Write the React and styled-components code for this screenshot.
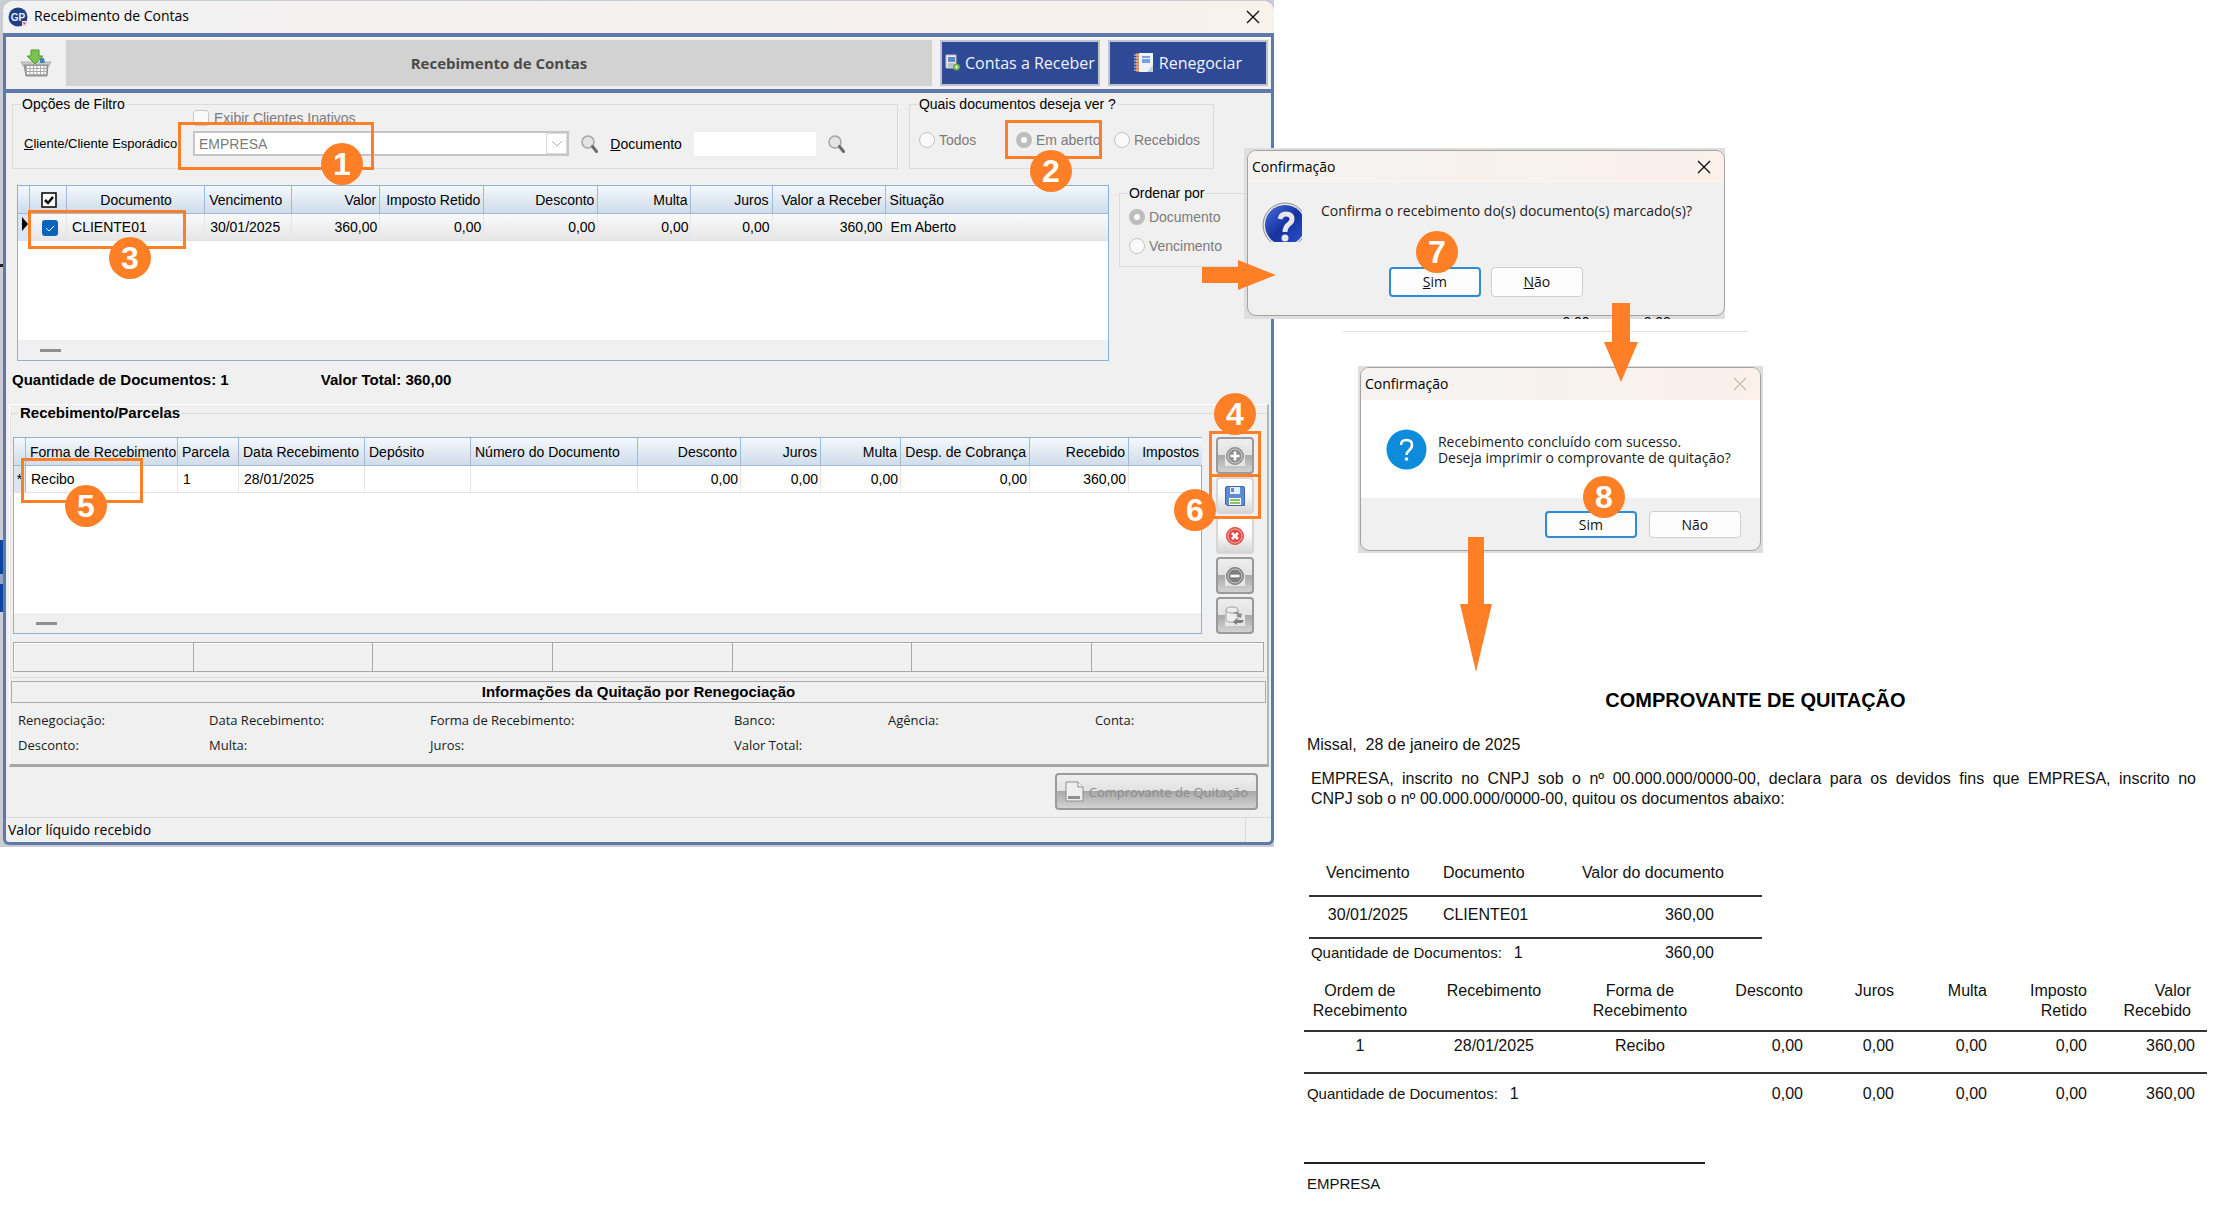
import React from 'react';
import styled, { createGlobalStyle, css } from 'styled-components';

const ORANGE = '#ff7f27';
const BLUE = '#5f79ad';

const GlobalStyle = createGlobalStyle`
* {
box-sizing: border-box;
}
body {
margin: 0;
background: white;
font-family: "Liberation Sans", Arial, sans-serif;
font-size: 14px;
line-height: 16px;
color: #000;
}
button, input, select {
font: inherit;
margin: 0;
}
svg {
flex-shrink: 0;
}
`

const Page = styled.main`
display: flex;
align-items: flex-start;
`

const Backdrop = styled.div`
width: 57.1%;
flex-shrink: 0;
padding: 1px 0 2px 3px;
background: linear-gradient(#c9ccd2 0 264px, #222 264px 267px, #c9ccd2 267px 540px, #0b47a1 540px 574px, #8fa3c4 574px 584px, #0b47a1 584px 612px, #c9ccd2 612px);
`

const AppWindow = styled.section`
border: 3px solid ${BLUE};
border-top: 0;
border-radius: 9px 9px 6px 6px;
background: #f0f0f0;
`

const TitleBar = styled.header`
display: flex;
align-items: center;
height: 32px;
margin: 0 -3px;
padding: 0 14px 0 3px;
background: linear-gradient(90deg, #f2f2f3, #f8f1ec);
border-radius: 9px 9px 0 0;
font: 14px/20px "Open Sans", "Noto Sans", sans-serif;
`

const TitleText = styled.h1`
flex: 1;
margin: 0 0 2px 5px;
font: inherit;
`

const CloseButton = styled.button`
display: flex;
padding: 0;
border: 0;
background: none;
color: ${p => (p.disabled ? '#c4c0be' : '#111')};
`

const Toolbar = styled.div`
display: flex;
align-items: center;
gap: 8px;
height: 60px;
border: solid ${BLUE};
border-width: 4px 0;
padding: 2px 3px 3px 8px;
box-shadow: inset 0 2px #fafafa;
`

const ToolIcon = styled.button`
display: flex;
justify-content: center;
width: 44px;
padding: 0;
border: 0;
background: none;
`

const ToolTitle = styled.h2`
flex: 1;
margin: 0;
background: #d2d2d2;
color: #4a4a4a;
font: bold 15px/46px "Open Sans", "Noto Sans", sans-serif;
text-align: center;
`

const NavButton = styled.button`
display: flex;
align-items: center;
justify-content: center;
gap: 5px;
width: 160px;
height: 46px;
padding: 0;
border: 2px solid #bfc3cb;
background: #2e4a96;
color: #f1f3f8;
font: 16px/20px "Open Sans", "Noto Sans", sans-serif;
white-space: nowrap;
`

const FilterRow = styled.div`
display: flex;
gap: 11px;
padding: 3px 57px 0 6px;
`

const Group = styled.fieldset`
position: relative;
min-width: 0;
margin: 0;
padding: 0 0 12px;
border: 1px solid #dcdcdc;
flex: ${p => p.$flex || 'none'};
`

const Legend = styled.legend`
margin-left: 8px;
padding: 0 1px;
white-space: nowrap;
font-weight: ${p => (p.$bold ? 'bold' : 'normal')};
font-size: ${p => (p.$bold ? '15px' : '14px')};
`

const InactiveLabel = styled.label`
display: flex;
align-items: center;
gap: 5px;
height: 15px;
margin: -2px 0 0 180px;
color: #7b7b7b;
`

const CheckBox = styled.input`
appearance: none;
width: 16px;
height: 16px;
flex-shrink: 0;
border: 1px solid #c8c8c8;
border-radius: 3px;
background: #fafafa;
`

const FieldRow = styled.div`
display: flex;
align-items: center;
gap: 12px;
margin-top: 6px;
padding: 0 52px 0 11px;
`

const ClientLabel = styled.label`
width: 157px;
font-size: 13px;
white-space: nowrap;
`

const Combo = styled.div`
position: relative;
flex: 1;
`

const ComboSelect = styled.select`
display: block;
appearance: none;
width: 100%;
height: 25px;
padding: 0 4px;
border: 2px solid #c6c6c6;
border-radius: 0;
background: white;
color: #7b7b7b;
opacity: 1;
`

const ComboArrow = styled.span`
position: absolute;
top: 2px;
right: 2px;
display: flex;
align-items: center;
justify-content: center;
width: 21px;
height: 21px;
border: 1px solid #dcdcdc;
pointer-events: none;
`

const DocInput = styled.input`
width: 122px;
height: 24px;
border: 0;
background: white;
`

const IconButton = styled.button`
display: flex;
padding: 0;
border: 0;
background: none;
`

const Radios = styled.div`
display: flex;
flex-direction: ${p => (p.$column ? 'column' : 'row')};
gap: ${p => (p.$column ? '13px' : '0')};
padding: ${p => (p.$column ? '8px 9px 0' : '20px 9px 0')};
`

const RadioLabel = styled.label`
position: relative;
display: flex;
align-items: center;
gap: 4px;
width: ${p => p.$width || 'auto'};
color: #7b7b7b;
white-space: nowrap;
`

const Radio = styled.input`
appearance: none;
width: 16px;
height: 16px;
margin: 0;
flex-shrink: 0;
border: 1px solid #c4c4c4;
border-radius: 50%;
background: #fafafa;
&:checked {
border: 5px solid #bdbdbd;
}
`

/* orange rectangle drawn over the part that a step talks about */
const Mark = styled.div`
position: absolute;
z-index: 2;
border: 3px solid ${ORANGE};
pointer-events: none;
top: ${p => p.$top}px;
left: ${p => p.$left}px;
width: ${p => p.$width}px;
height: ${p => p.$height}px;
`

const Badge = styled.span`
position: absolute;
z-index: 3;
top: ${p => p.$top}px;
left: ${p => p.$left}px;
width: 42px;
height: 42px;
border-radius: 50%;
background: ${ORANGE};
color: white;
font-weight: bold;
font-size: 32px;
line-height: 42px;
text-align: center;
`

const GridRow = styled.div`
display: flex;
align-items: flex-start;
gap: ${p => p.$gap}px;
padding: ${p => p.$padding};
`

const GridBox = styled.div`
position: relative;
flex: 1;
min-width: 0;
display: flex;
flex-direction: column;
height: ${p => p.$height}px;
border: 1px solid #8fb0cf;
background: white;
`

const Table = styled.table`
width: 100%;
table-layout: fixed;
border-collapse: separate;
border-spacing: 0;
`

const Th = styled.th`
height: 28px;
padding: 0 3px 0 4px;
border-right: 1px solid #9dbbd8;
border-bottom: 1px solid #9dbbd8;
background: linear-gradient(#f4f8fc, #cfdcea);
font-weight: normal;
text-align: ${p => p.$align || 'left'};
white-space: nowrap;
&:last-child {
border-right: 0;
}
`

const Td = styled.td`
height: 27px;
padding: 0 2px 0 5px;
border-right: 1px solid #e6e6e6;
border-bottom: 1px solid #e2e2e2;
text-align: ${p => p.$align || 'left'};
white-space: nowrap;
${p => p.$shaded && css`
background: linear-gradient(#fafafa, #e6e6e6);
`}
&:first-child {
padding: 0;
border-right: 1px solid #9dbbd8;
background: #dce6f1;
}
&:last-child {
border-right: 0;
}
`

const BlueCheck = styled.span`
display: inline-flex;
vertical-align: middle;
`

const ScrollStrip = styled.div`
display: flex;
align-items: center;
height: 20px;
margin-top: auto;
padding-left: 22px;
background: #f0f0f0;
&::before {
content: "";
width: 21px;
height: 3px;
background: #8f8f8f;
}
`

const Totals = styled.div`
display: flex;
gap: 92px;
height: 43px;
padding: 11px 6px 0;
font-size: 15px;
font-weight: bold;
`

const Panel = styled.div`
margin: 0 2px 0 3px;
border: solid;
border-width: 1px 2px 3px 1px;
border-color: #fff #b5b5b5 #a6a6a6 #fff;
`

const ParcelGroup = styled(Group)`
border-color: #dcdcdc #f0f0f0 #dcdcdc #e4e4e4;
padding-bottom: 5px;
`

const SideButtons = styled.div`
position: relative;
display: flex;
flex-direction: column;
gap: 3px;
`

const Glossy = css`
border: 2px solid #9a9a9a;
border-radius: 4px;
background: linear-gradient(#eee 0, #e2e2e2 49%, #a9a9a9 50%, #d2d2d2 100%);
`

const SideButton = styled.button`
display: flex;
align-items: center;
justify-content: center;
width: 38px;
height: 37px;
padding: 0;
border: 2px solid #d6d6d6;
border-radius: 4px;
background: linear-gradient(#fff 40%, #d6d6d6);
${p => p.disabled && Glossy}
`

const IconPlate = styled.span`
display: flex;
background: ${p => (p.$grey ? '#e6e6e6' : 'none')};
`

const StatusCells = styled.div`
display: flex;
height: 30px;
margin: 8px 2px 0;
border: 1px solid #a9a9a9;
box-shadow: inset 1px 1px #fff;
`

const StatusCell = styled.div`
flex: 180;
border-right: 1px solid #a9a9a9;
&:last-child {
flex: 172;
border-right: 0;
}
`

const InfoTitle = styled.h3`
margin: 3px 1px 0;
border: 1px solid #a9a9a9;
font-size: 15px;
line-height: 20px;
text-align: center;
`

const InfoGrid = styled.div`
display: grid;
grid-template-columns: 191fr 221fr 304fr 154fr 207fr 172fr;
row-gap: 5px;
padding: 7px 0 9px 8px;
font: 13px/20px "Open Sans", "Noto Sans", sans-serif;
color: #1a1a1a;
`

const Actions = styled.div`
display: flex;
justify-content: flex-end;
padding: 6px 13px 7px 0;
`

const ReceiptButton = styled.button`
display: flex;
align-items: center;
justify-content: center;
gap: 5px;
width: 203px;
height: 37px;
padding: 0;
color: #8c8c8c;
font: 13px/20px "Open Sans", "Noto Sans", sans-serif;
white-space: nowrap;
${Glossy}
`

const StatusBar = styled.footer`
display: flex;
border-top: 1px solid #dadada;
font: 14px/24px "Open Sans", "Noto Sans", sans-serif;
padding-left: 2px;
`

const StatusText = styled.span`
flex: 1;
margin-right: 25px;
border-right: 1px solid #dadada;
`

const Side = styled.div`
position: relative;
z-index: 4;
flex: 1;
min-width: 0;
padding-top: 148px;
`

const Shot = styled.div`
position: relative;
width: ${p => p.$width}px;
margin: ${p => p.$margin};
padding: ${p => p.$padding};
background: #dedede;
`

const Dialog = styled.section`
position: relative;
overflow: hidden;
border: 1px solid #a2a2a2;
border-radius: 9px;
background: #f0f0f0;
font: 14px/16px "Open Sans", "Noto Sans", sans-serif;
color: #1c1c1c;
`

const DialogTitle = styled.header`
display: flex;
align-items: center;
justify-content: space-between;
height: 32px;
padding: 0 13px 0 4px;
background: linear-gradient(90deg, #f4f3f1, #fbf0ea);
color: #000;
`

const DialogBody = styled.div`
display: flex;
gap: ${p => (p.$white ? '11px' : '19px')};
height: ${p => (p.$white ? '98px' : '84px')};
padding: ${p => (p.$white ? '29px 0 0 25px' : '19px 0 0 14px')};
background: ${p => (p.$white ? 'white' : 'none')};
`

const Message = styled.p`
margin: ${p => (p.$lines === 2 ? '5px 0 0' : '1px 0 0')};
white-space: nowrap;
`

const DialogButtons = styled.div`
display: flex;
justify-content: ${p => (p.$right ? 'flex-end' : 'center')};
gap: ${p => (p.$right ? '12px' : '10px')};
padding: ${p => (p.$right ? '13px 19px 12px' : '0 0 18px')};
`

const DialogButton = styled.button`
width: 92px;
height: ${p => (p.$small ? '27px' : '30px')};
padding: 0;
border: ${p => (p.$primary ? '2px solid #2f8ad8' : '1px solid #cfcfcf')};
border-radius: 4px;
background: #fdfdfd;
color: #111;
`

/* leftover of the list behind the first dialog */
const Leftover = styled.div`
position: absolute;
right: 54px;
bottom: 0;
display: flex;
gap: 54px;
height: 3px;
overflow: hidden;
font-size: 14px;
line-height: 12px;
`

const Arrow = styled.svg`
position: absolute;
z-index: 5;
top: ${p => p.$top}px;
left: ${p => p.$left}px;
fill: ${ORANGE};
`

const Divider = styled.hr`
width: 405px;
margin: 12px 0 34px 69px;
border: 0;
border-top: 1px solid #e2e2e2;
`

const Receipt = styled.article`
margin: 135px 24px 0 30px;
font-size: 16px;
line-height: 20px;
color: #111;
`

const ReceiptTitle = styled.h2`
margin: 0;
font-size: 20px;
line-height: 24px;
text-align: center;
color: #000;
`

const City = styled.p`
margin: 23px 0 0 3px;
white-space: pre;
`

const Statement = styled.p`
margin: 14px 11px 54px 7px;
text-align: justify;
`

const DocTable = styled(Table)`
width: 50%;
margin-left: 5px;
`

const DocTh = styled.th`
padding: 0 ${p => p.$pad || 0}px 12px ${p => p.$indent || 0}px;
border-bottom: 2px solid #333;
font-weight: normal;
text-align: ${p => p.$align || 'left'};
`

const DocTd = styled.td`
padding: 8px ${p => p.$pad || 0}px 12px ${p => p.$indent || 0}px;
border-bottom: 2px solid #333;
text-align: ${p => p.$align || 'left'};
`

const FootTd = styled.td`
padding: ${p => p.$top}px ${p => p.$pad || 0}px 0 ${p => p.$indent || 0}px;
text-align: ${p => p.$align || 'left'};
white-space: nowrap;
`

const CountLabel = styled.span`
margin-right: 12px;
font-size: 15px;
`

const PayTable = styled(Table)`
margin-top: 18px;
`

const PayTh = styled(DocTh)`
padding-bottom: 9px;
vertical-align: top;
`

const PayTd = styled(DocTd)`
padding-top: 4px;
padding-bottom: 16px;
`

const Signature = styled.p`
width: 401px;
margin: 58px 0 0;
padding: 10px 3px 0;
border-top: 2px solid #222;
font-size: 15px;
`

const CloseIcon = () => (
    <svg width="14" height="14" viewBox="0 0 14 14" fill="none" stroke="currentColor" strokeWidth="1.4">
        <path d="M1 1l12 12M13 1L1 13" />
    </svg>
)

const LogoIcon = () => (
    <svg width="23" height="20" viewBox="0 0 23 20">
        <circle cx="12" cy="10" r="9.5" fill="#1f3f86" />
        <text x="12" y="14" textAnchor="middle" fontSize="10" fontWeight="bold" fontFamily="Liberation Sans, sans-serif" fill="#e8eefb">GP</text>
        <path d="M16 14h5v5h-5z" fill="#e9dfe2" />
        <path d="M17 15l3 1-2 2z" fill="#d8434a" />
    </svg>
)

const BasketIcon = () => (
    <svg width="32" height="28" viewBox="0 0 32 28">
        <path d="M1 13h30l-2 4H3z" fill="#c9c9c9" stroke="#b3b3b3" />
        <path d="M4 16h24l-1 11H6z" fill="#a9a9a9" stroke="#8c8c8c" />
        <path d="M7 18h19M7 21h19M7 24h19" stroke="#fff" strokeWidth="2" strokeDasharray="2.500 1" />
        <path d="M20 9l4 0 1 5-5 0z" fill="#3f86b8" />
        <path d="M11 1h8v6h4l-8 8-8-8h4z" fill="#7cc24f" stroke="#4f9a2c" />
    </svg>
)

const ReceiveIcon = () => (
    <svg width="15" height="17" viewBox="0 0 15 17">
        <path d="M1 1h10v13H1z" fill="#e9ecef" stroke="#b9bfc6" />
        <path d="M3 3h7v5H3z" fill="#5f86c8" />
        <path d="M3 10h6M3 12h6" stroke="#8d939b" />
        <circle cx="11.500" cy="13" r="3.500" fill="#5fae3c" />
        <path d="M11.500 11v4M9.500 13h4" stroke="#fff" strokeWidth="1.200" />
    </svg>
)

const NotebookIcon = () => (
    <svg width="20" height="21" viewBox="0 0 20 21">
        <path d="M2 1h4v19H2z" fill="#c9764b" />
        <path d="M5 1h14v19H5z" fill="#eef3f9" />
        <path d="M0 3h5M0 6h5M0 9h5M0 12h5M0 15h5M0 18h5" stroke="#dadada" />
        <path d="M8 5h8M8 8h8M8 10h8" stroke="#5a87cf" strokeWidth="1.500" />
        <path d="M19 13l-6 7h6z" fill="#c5cfdb" />
    </svg>
)

const SearchIcon = () => (
    <svg width="17" height="18" viewBox="0 0 17 18" fill="none">
        <circle cx="7" cy="7" r="6" fill="#e2e4e6" stroke="#a4a4a4" strokeWidth="1.500" />
        <path d="M11.500 11.500l4 5" stroke="#6b6b6b" strokeWidth="3" strokeLinecap="round" />
    </svg>
)

const RoundIcon = ({ color, path }) => (
    <svg width="20" height="20" viewBox="0 0 20 20" fill="none">
        <circle cx="10" cy="10" r="8.500" fill={color} stroke={color} />
        <circle cx="10" cy="10" r="7" stroke="#fff" strokeOpacity="0.6" />
        <path d={path} stroke="#fff" strokeWidth="2.600" />
    </svg>
)

const DiskIcon = () => (
    <svg width="20" height="20" viewBox="0 0 20 20">
        <path d="M2 .5h16q1.500 0 1.500 1.500v17.500H2L.5 18V2Q.5.500 2 .5z" fill="#5d8cd6" stroke="#3c66b4" />
        <path d="M5 1h10v7H5z" fill="#e9eff9" />
        <path d="M6 2h3v4H6z" fill="#5d8cd6" />
        <path d="M4 12h12v7H4z" fill="#fff" />
        <path d="M5 14h10M5 17h10" stroke="#86c95a" strokeWidth="2" />
    </svg>
)

const DatabaseIcon = () => (
    <svg width="20" height="20" viewBox="0 0 20 20" fill="#ededed" stroke="#a2a2a2">
        <path d="M1 4v10c0 3 12 3 12 0V4" />
        <ellipse cx="7" cy="4" rx="6" ry="3" />
        <path d="M8 8q4-4 7 0l2-1-1 5-5-2 2-1q-2-2-5-1z" fill="#8a8a8a" stroke="none" />
        <path d="M19 14h-7v-2l-4 4 4 3v-2h5z" fill="#7d7d7d" stroke="none" />
    </svg>
)

const PageIcon = () => (
    <svg width="19" height="21" viewBox="0 0 19 21" fill="#efefef" stroke="#8d8d8d">
        <path d="M1 1h12l5 5v14H1z" />
        <path d="M13 1v5h5" fill="#fff" />
        <path d="M3 15h12v3H3z" fill="#8f8f8f" stroke="none" />
    </svg>
)

const GlassQuestion = () => (
    <svg width="40" height="40" viewBox="0 0 40 40" fill="none">
        <defs>
            <linearGradient id="glass" x1="0" y1="0" x2="1" y2="1">
                <stop offset="0" stopColor="#4a70dd" />
                <stop offset="0.5" stopColor="#1632a0" />
                <stop offset="1" stopColor="#2f55d0" />
            </linearGradient>
        </defs>
        <circle cx="23" cy="23" r="22" fill="#e4e4e4" stroke="#8b8b8b" />
        <circle cx="23" cy="23" r="20" fill="url(#glass)" />
        <path d="M18 17q1-5 6-5 6 0 6 5 0 3-3 5-4 3-4 8" stroke="#e6e6ea" strokeWidth="5" />
        <circle cx="23" cy="36" r="3.500" fill="#e6e6ea" />
    </svg>
)

const RoundQuestion = () => (
    <svg width="41" height="41" viewBox="0 0 41 41" fill="none">
        <circle cx="20.500" cy="20.500" r="20" fill="#0f8bdc" />
        <path d="M15 16q0-5 5.500-5t5.500 5q0 3-3 5.500-2.500 2-2.500 4.500" stroke="#fff" strokeWidth="2.500" />
        <circle cx="20.500" cy="30" r="1.800" fill="#fff" />
    </svg>
)

const RightArrow = ({ top, left }) => (
    <Arrow $top={top} $left={left} width="74" height="30" viewBox="0 0 74 30">
        <path d="M0 7h36V0l38 15-38 15v-7H0z" />
    </Arrow>
)

const DownArrow = ({ top, left, width, height, neck }) => (
    <Arrow $top={top} $left={left} width={width} height={height} viewBox={`0 0 ${width} ${height}`}>
        <path d={`M8 0h${width - 16}V${neck}h8L${width / 2} ${height}L0 ${neck}h8z`} />
    </Arrow>
)

const documentColumns = [
    { label: 'Documento', width: 138, align: 'center', cell: 'left', value: 'CLIENTE01' },
    { label: 'Vencimento', width: 87, value: '30/01/2025' },
    { label: 'Valor', width: 88, align: 'right', value: '360,00' },
    { label: 'Imposto Retido', width: 104, align: 'right', value: '0,00' },
    { label: 'Desconto', width: 114, align: 'right', value: '0,00' },
    { label: 'Multa', width: 93, align: 'right', value: '0,00' },
    { label: 'Juros', width: 81, align: 'right', value: '0,00' },
    { label: 'Valor a Receber', width: 113, align: 'right', value: '360,00' },
    { label: 'Situação', width: 222, value: 'Em Aberto' },
]

const parcelColumns = [
    { label: 'Forma de Recebimento', width: 152, value: 'Recibo' },
    { label: 'Parcela', width: 61, value: '1' },
    { label: 'Data Recebimento', width: 126, value: '28/01/2025' },
    { label: 'Depósito', width: 106, value: '' },
    { label: 'Número do Documento', width: 167, value: '' },
    { label: 'Desconto', width: 103, align: 'right', value: '0,00' },
    { label: 'Juros', width: 80, align: 'right', value: '0,00' },
    { label: 'Multa', width: 80, align: 'right', value: '0,00' },
    { label: 'Desp. de Cobrança', width: 129, align: 'right', value: '0,00' },
    { label: 'Recebido', width: 99, align: 'right', value: '360,00' },
    { label: 'Impostos', width: 73, align: 'right', value: '' },
]

const payColumns = [
    { label: ['Ordem de', 'Recebimento'], width: 112, align: 'center', value: '1' },
    { label: ['Recebimento'], width: 156, align: 'center', value: '28/01/2025' },
    { label: ['Forma de', 'Recebimento'], width: 136, align: 'center', value: 'Recibo' },
    { label: ['Desconto'], width: 99, align: 'right', value: '0,00' },
    { label: ['Juros'], width: 91, align: 'right', value: '0,00' },
    { label: ['Multa'], width: 93, align: 'right', value: '0,00' },
    { label: ['Imposto', 'Retido'], width: 100, align: 'right', value: '0,00' },
    { label: ['Valor', 'Recebido'], width: 116, align: 'right', value: '360,00' },
]

const infoLabels = [
    'Renegociação:', 'Data Recebimento:', 'Forma de Recebimento:', 'Banco:', 'Agência:', 'Conta:',
    'Desconto:', 'Multa:', 'Juros:', 'Valor Total:',
]

const Filters = () => (
    <FilterRow>
        <Group $flex="1">
            <Legend>Opções de Filtro</Legend>
            <InactiveLabel>
                <CheckBox type="checkbox" disabled />
                Exibir Clientes Inativos
            </InactiveLabel>
            <FieldRow>
                <ClientLabel htmlFor="cliente"><u>C</u>liente/Cliente Esporádico</ClientLabel>
                <Combo>
                    <ComboSelect id="cliente" disabled defaultValue="EMPRESA">
                        <option>EMPRESA</option>
                    </ComboSelect>
                    <ComboArrow>
                        <svg width="12" height="8" viewBox="0 0 12 8" fill="none" stroke="#b5b5b5">
                            <path d="M1 1l5 5 5-5" />
                        </svg>
                    </ComboArrow>
                    <Mark $top={-9} $left={-15} $width={196} $height={48} />
                    <Badge $top={12} $left={128}>1</Badge>
                </Combo>
                <IconButton aria-label="Buscar cliente"><SearchIcon /></IconButton>
                <label htmlFor="documento"><u>D</u>ocumento</label>
                <DocInput id="documento" type="text" />
                <IconButton aria-label="Buscar documento"><SearchIcon /></IconButton>
            </FieldRow>
        </Group>
        <Group $flex="0 0 305px">
            <Legend>Quais documentos deseja ver ?</Legend>
            <Radios>
                <RadioLabel $width="97px">
                    <Radio type="radio" name="ver" disabled />Todos
                </RadioLabel>
                <RadioLabel $width="98px">
                    <Radio type="radio" name="ver" disabled defaultChecked />Em aberto
                    <Mark $top={-12} $left={-11} $width={97} $height={39} />
                    <Badge $top={18} $left={14}>2</Badge>
                </RadioLabel>
                <RadioLabel>
                    <Radio type="radio" name="ver" disabled />Recebidos
                </RadioLabel>
            </Radios>
        </Group>
    </FilterRow>
)

const DocumentGrid = () => (
    <GridBox $height={176}>
        <Table>
            <colgroup>
                <col style={{ width: 12 }} />
                <col style={{ width: 37 }} />
                {documentColumns.map(c => <col key={c.label} style={{ width: c.width }} />)}
            </colgroup>
            <thead>
                <tr>
                    <Th />
                    <Th $align="center">
                        <BlueCheck>
                            <svg width="16" height="16" viewBox="0 0 16 16" fill="#fff" stroke="#000">
                                <path d="M1 1h14v14H1z" strokeWidth="1.500" />
                                <path d="M4 8l3 3 5-6" fill="none" strokeWidth="2.500" />
                            </svg>
                        </BlueCheck>
                    </Th>
                    {documentColumns.map(c => <Th key={c.label} $align={c.align}>{c.label}</Th>)}
                </tr>
            </thead>
            <tbody>
                <tr>
                    <Td>
                        <svg width="10" height="20" viewBox="0 0 10 20"><path d="M4 1l6 7-6 7z" /></svg>
                    </Td>
                    <Td $align="center" $shaded>
                        <BlueCheck>
                            <svg width="16" height="16" viewBox="0 0 16 16" fill="none">
                                <rect width="16" height="16" rx="3" fill="#0a63bd" />
                                <path d="M4 8l3 3 5-5" stroke="#fff" />
                            </svg>
                        </BlueCheck>
                    </Td>
                    {documentColumns.map(c => (
                        <Td key={c.label} $align={c.cell || c.align} $shaded>{c.value}</Td>
                    ))}
                </tr>
            </tbody>
        </Table>
        <ScrollStrip />
        <Mark $top={24} $left={10} $width={158} $height={39} />
        <Badge $top={51} $left={91}>3</Badge>
    </GridBox>
)

const ParcelGrid = () => (
    <GridBox $height={197}>
        <Table>
            <colgroup>
                <col style={{ width: 12 }} />
                {parcelColumns.map(c => <col key={c.label} style={{ width: c.width }} />)}
            </colgroup>
            <thead>
                <tr>
                    <Th />
                    {parcelColumns.map(c => <Th key={c.label} $align={c.align}>{c.label}</Th>)}
                </tr>
            </thead>
            <tbody>
                <tr>
                    <Td $align="center">*</Td>
                    {parcelColumns.map(c => <Td key={c.label} $align={c.align}>{c.value}</Td>)}
                </tr>
            </tbody>
        </Table>
        <ScrollStrip />
        <Mark $top={20} $left={7} $width={122} $height={45} />
        <Badge $top={47} $left={51}>5</Badge>
    </GridBox>
)

const RecordButtons = () => (
    <SideButtons>
        <SideButton disabled aria-label="Adicionar">
            <IconPlate $grey><RoundIcon color="#8f8f8f" path="M10 5.500v9M5.500 10h9" /></IconPlate>
        </SideButton>
        <SideButton aria-label="Salvar"><DiskIcon /></SideButton>
        <SideButton aria-label="Cancelar">
            <RoundIcon color="#df4a42" path="M7 7l6 6M13 7l-6 6" />
        </SideButton>
        <SideButton disabled aria-label="Remover">
            <IconPlate $grey><RoundIcon color="#7f7f7f" path="M5.500 10h9" /></IconPlate>
        </SideButton>
        <SideButton disabled aria-label="Atualizar">
            <IconPlate $grey><DatabaseIcon /></IconPlate>
        </SideButton>
        <Mark $top={-6} $left={-7} $width={52} $height={46} />
        <Mark $top={37} $left={-7} $width={52} $height={45} />
        <Badge $top={-44} $left={-2}>4</Badge>
        <Badge $top={52} $left={-42}>6</Badge>
    </SideButtons>
)

const ReceiptDocument = () => (
    <Receipt>
        <ReceiptTitle>COMPROVANTE DE QUITAÇÃO</ReceiptTitle>
        <City>{'Missal,  28 de janeiro de 2025'}</City>
        <Statement>
            EMPRESA, inscrito no CNPJ sob o nº 00.000.000/0000-00, declara para os devidos fins
            que EMPRESA, inscrito no CNPJ&nbsp;sob o nº 00.000.000/0000-00, quitou os documentos abaixo:
        </Statement>
        <DocTable>
            <colgroup>
                <col style={{ width: 118 }} />
                <col style={{ width: 122 }} />
                <col style={{ width: 213 }} />
            </colgroup>
            <thead>
                <tr>
                    <DocTh $align="center">Vencimento</DocTh>
                    <DocTh $indent={16}>Documento</DocTh>
                    <DocTh $align="right" $pad={38}>Valor do documento</DocTh>
                </tr>
            </thead>
            <tbody>
                <tr>
                    <DocTd $align="center">30/01/2025</DocTd>
                    <DocTd $indent={16}>CLIENTE01</DocTd>
                    <DocTd $align="right" $pad={48}>360,00</DocTd>
                </tr>
            </tbody>
            <tfoot>
                <tr>
                    <FootTd colSpan={2} $top={4} $indent={2}>
                        <CountLabel>Quantidade de Documentos:</CountLabel>1
                    </FootTd>
                    <FootTd $align="right" $top={4} $pad={48}>360,00</FootTd>
                </tr>
            </tfoot>
        </DocTable>
        <PayTable>
            <colgroup>
                {payColumns.map((c, i) => <col key={i} style={{ width: c.width }} />)}
            </colgroup>
            <thead>
                <tr>
                    {payColumns.map((c, i) => (
                        <PayTh key={i} $align={c.align} $pad={i === 7 ? 16 : i > 2 ? 4 : 0}>
                            {c.label[0]}
                            {c.label[1] && <><br />{c.label[1]}</>}
                        </PayTh>
                    ))}
                </tr>
            </thead>
            <tbody>
                <tr>
                    {payColumns.map((c, i) => (
                        <PayTd key={i} $align={c.align} $pad={i === 7 ? 12 : i > 2 ? 4 : 0}>{c.value}</PayTd>
                    ))}
                </tr>
            </tbody>
            <tfoot>
                <tr>
                    <FootTd colSpan={3} $top={10} $indent={3}>
                        <CountLabel>Quantidade de Documentos:</CountLabel>1
                    </FootTd>
                    {payColumns.slice(3).map((c, i) => (
                        <FootTd key={i} $align="right" $top={10} $pad={i === 4 ? 12 : 4}>{c.value}</FootTd>
                    ))}
                </tr>
            </tfoot>
        </PayTable>
        <Signature>EMPRESA</Signature>
    </Receipt>
)

const App = () => {

return(
    <Page>
        <GlobalStyle />
        <Backdrop>
            <AppWindow>
                <TitleBar>
                    <LogoIcon />
                    <TitleText>Recebimento de Contas</TitleText>
                    <CloseButton aria-label="Fechar"><CloseIcon /></CloseButton>
                </TitleBar>
                <Toolbar>
                    <ToolIcon aria-label="Receber"><BasketIcon /></ToolIcon>
                    <ToolTitle>Recebimento de Contas</ToolTitle>
                    <NavButton><ReceiveIcon />Contas a Receber</NavButton>
                    <NavButton><NotebookIcon />Renegociar</NavButton>
                </Toolbar>
                <Filters />
                <GridRow $gap={10} $padding="16px 2px 0 11px">
                    <DocumentGrid />
                    <Group $flex="0 0 150px">
                        <Legend>Ordenar por</Legend>
                        <Radios $column>
                            <RadioLabel>
                                <Radio type="radio" name="ordem" disabled defaultChecked />Documento
                            </RadioLabel>
                            <RadioLabel>
                                <Radio type="radio" name="ordem" disabled />Vencimento
                            </RadioLabel>
                        </Radios>
                    </Group>
                </GridRow>
                <Totals>
                    <span>Quantidade de Documentos: 1</span>
                    <span>Valor Total: 360,00</span>
                </Totals>
                <Panel>
                    <ParcelGroup>
                        <Legend $bold>Recebimento/Parcelas</Legend>
                        <GridRow $gap={14} $padding="16px 12px 0 2px">
                            <ParcelGrid />
                            <RecordButtons />
                        </GridRow>
                        <StatusCells>
                            {[1, 2, 3, 4, 5, 6, 7].map(n => <StatusCell key={n} />)}
                        </StatusCells>
                    </ParcelGroup>
                    <InfoTitle>Informações da Quitação por Renegociação</InfoTitle>
                    <InfoGrid>
                        {infoLabels.map(l => <span key={l}>{l}</span>)}
                    </InfoGrid>
                </Panel>
                <Actions>
                    <ReceiptButton disabled><PageIcon />Comprovante de Quitação</ReceiptButton>
                </Actions>
                <StatusBar><StatusText>Valor líquido recebido</StatusText></StatusBar>
            </AppWindow>
        </Backdrop>
        <Side>
            <Shot $width={481} $margin="0 0 0 -30px" $padding="2px 0 3px 3px">
                <Dialog>
                    <DialogTitle>
                        Confirmação
                        <CloseButton aria-label="Fechar"><CloseIcon /></CloseButton>
                    </DialogTitle>
                    <DialogBody>
                        <GlassQuestion />
                        <Message>Confirma o recebimento do(s) documento(s) marcado(s)?</Message>
                    </DialogBody>
                    <DialogButtons>
                        <DialogButton $primary><u>S</u>im</DialogButton>
                        <DialogButton><u>N</u>ão</DialogButton>
                    </DialogButtons>
                </Dialog>
                <Leftover><span>0,00</span><span>0,00</span></Leftover>
                <Badge $top={83} $left={172}>7</Badge>
                <RightArrow top={112} left={-42} />
                <DownArrow top={155} left={360} width={34} height={79} neck={39} />
            </Shot>
            <Divider />
            <Shot $width={405} $margin="0 0 0 84px" $padding="1px 2px 2px">
                <Dialog>
                    <DialogTitle>
                        Confirmação
                        <CloseButton disabled aria-label="Fechar"><CloseIcon /></CloseButton>
                    </DialogTitle>
                    <DialogBody $white>
                        <RoundQuestion />
                        <Message $lines={2}>
                            Recebimento concluído com sucesso.<br />
                            Deseja imprimir o comprovante de quitação?
                        </Message>
                    </DialogBody>
                    <DialogButtons $right>
                        <DialogButton $primary $small>Sim</DialogButton>
                        <DialogButton $small>Não</DialogButton>
                    </DialogButtons>
                </Dialog>
                <Badge $top={110} $left={225}>8</Badge>
                <DownArrow top={171} left={102} width={32} height={135} neck={67} />
            </Shot>
            <ReceiptDocument />
        </Side>
    </Page>
)

}

export default App;
